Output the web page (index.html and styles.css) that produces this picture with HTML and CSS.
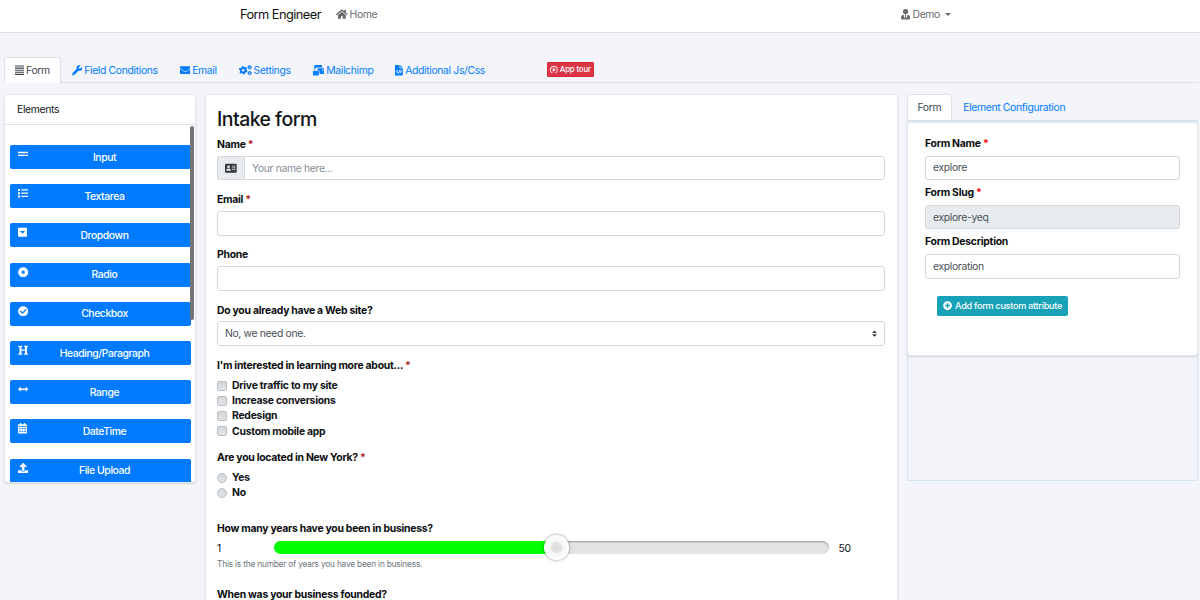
FILE: index.html
```
<!DOCTYPE html>
<html lang="en">
<head>
    <meta charset="UTF-8">
    <meta name="viewport" content="width=device-width, initial-scale=1.0">
    <title>Form Engineer</title>
    <link rel="stylesheet" href="styles.css">
</head>
<body>
    <nav class="navbar">
        <a class="brand" href="#">Form Engineer</a>
        <a class="nav-item" href="#">
            <svg class="icon" viewBox="0 0 576 512"><path d="M280.37 148.26L96 300.11V464a16 16 0 0 0 16 16l112.06-.29a16 16 0 0 0 15.92-16V368a16 16 0 0 1 16-16h64a16 16 0 0 1 16 16v95.64a16 16 0 0 0 16 16.05L464 480a16 16 0 0 0 16-16V300L295.67 148.26a12.19 12.19 0 0 0-15.3 0zM571.6 251.47L488 182.56V44.05a12 12 0 0 0-12-12h-56a12 12 0 0 0-12 12v72.61L318.47 43a48 48 0 0 0-61 0L4.34 251.47a12 12 0 0 0-1.6 16.9l25.5 31A12 12 0 0 0 45.15 301l235.22-193.74a12.19 12.19 0 0 1 15.3 0L530.9 301a12 12 0 0 0 16.9-1.6l25.5-31a12 12 0 0 0-1.7-16.93z"/></svg>
            Home
        </a>
        <a class="nav-item user" href="#">
            <svg class="icon" viewBox="0 0 448 512"><path d="M224 256a128 128 0 1 0 0-256 128 128 0 0 0 0 256zm96 33l-48 191-32-136 32-56h-96l32 56-32 136-48-191C57 292 0 350 0 422v42c0 26 21 48 48 48h352c27 0 48-22 48-48v-42c0-72-57-130-128-133z"/></svg>
            Demo
            <span class="caret"></span>
        </a>
    </nav>

    <ul class="tabs main-tabs">
        <li class="tab active">
            <svg class="icon" viewBox="0 0 448 512"><path d="M0 20h448v56H0zM0 124h448v56H0zM0 228h448v56H0zM0 332h448v56H0zM0 436h448v56H0z"/></svg>
            Form
        </li>
        <li class="tab">
            <svg class="icon" viewBox="0 0 512 512"><path d="M507.73 109.1c-2.24-9.03-13.54-12.09-20.12-5.51l-74.36 74.36-67.88-11.31-11.31-67.88 74.36-74.36c6.62-6.62 3.43-17.9-5.66-20.16-47.38-11.74-99.55.91-136.58 37.93-39.64 39.64-50.55 97.1-34.05 147.2L18.74 402.76c-24.99 24.99-24.99 65.51 0 90.5 24.99 24.99 65.51 24.99 90.5 0l213.21-213.21c50.12 16.71 107.47 5.68 147.37-34.22 37.07-37.07 49.7-89.32 37.91-136.73zM64 472c-13.25 0-24-10.75-24-24 0-13.26 10.75-24 24-24s24 10.74 24 24c0 13.25-10.75 24-24 24z"/></svg>
            Field Conditions
        </li>
        <li class="tab">
            <svg class="icon" viewBox="0 0 512 512"><path d="M502.3 190.8c3.9-3.1 9.7-.2 9.7 4.7V400c0 26.5-21.5 48-48 48H48c-26.5 0-48-21.5-48-48V195.6c0-5 5.7-7.8 9.7-4.7 22.4 17.4 52.1 39.5 154.1 113.6 21.1 15.4 56.7 47.8 92.2 47.6 35.7.3 72-32.8 92.3-47.6 102-74.1 131.6-96.3 154-113.7zM256 320c23.2.4 56.6-29.2 73.4-41.4 132.7-96.3 142.8-104.7 173.4-128.7 5.8-4.5 9.2-11.5 9.2-18.9v-19c0-26.5-21.5-48-48-48H48c-26.5 0-48 21.5-48 48v19c0 7.4 3.4 14.3 9.2 18.9 30.6 23.9 40.7 32.4 173.4 128.7 16.8 12.2 50.2 41.8 73.4 41.4z"/></svg>
            Email
        </li>
        <li class="tab">
            <svg class="icon outline" viewBox="0 0 640 512">
                <circle cx="206" cy="256" r="112" stroke-width="100"/>
                <circle cx="206" cy="256" r="175" stroke-width="66" stroke-dasharray="92 91"/>
                <circle cx="520" cy="116" r="62" stroke-width="54"/>
                <circle cx="520" cy="116" r="95" stroke-width="36" stroke-dasharray="50 49"/>
                <circle cx="520" cy="396" r="62" stroke-width="54"/>
                <circle cx="520" cy="396" r="95" stroke-width="36" stroke-dasharray="50 49"/>
            </svg>
            Settings
        </li>
        <li class="tab">
            <svg class="icon" viewBox="0 0 576 512"><path d="M160 448c-26 0-48-22-48-48-28-21-51-38-59-43-12-9-33-20-53-37v160c0 18 14 32 32 32h224c18 0 32-14 32-32V320c-20 17-41 28-53 37-9 6-31 23-59 43zM128 416c20 15 12 15 32 0 84-60 99-71 128-94v-2c0-18-14-32-32-32H32c-18 0-32 14-32 32v2c29 23 44 34 128 94zM544 160H256c-18 0-32 14-32 32v64h32c35 0 64 29 64 64v128h224c18 0 32-14 32-32V192c0-18-14-32-32-32zm-32 128h-64v-64h64zM96 224c0-54 43-96 96-96h256V32c0-18-14-32-32-32H96C78 0 64 14 64 32v224h32z"/></svg>
            Mailchimp
        </li>
        <li class="tab">
            <svg class="icon" viewBox="0 0 384 512"><path fill-rule="evenodd" d="M24 0h200v136c0 13 11 24 24 24h136v328c0 13-11 24-24 24H24c-13 0-24-11-24-24V24C0 11 11 0 24 0zm96 244l-76 82 76 82 32-32-48-50 48-50zm98-12l-62 200 38 12 62-200zm50 12l-32 32 48 50-48 50 32 32 76-82zM256 0l128 128H256z"/></svg>
            Additional Js/Css
        </li>
        <li class="tour">
            <button class="btn btn-danger">
                <svg class="icon" viewBox="0 0 512 512"><path fill-rule="evenodd" d="M256 8a248 248 0 1 0 0 496 248 248 0 0 0 0-496zm0 52a196 196 0 1 1 0 392 196 196 0 0 1 0-392zm-72 68l208 128-208 128z"/></svg>
                App tour
            </button>
        </li>
    </ul>

    <main class="builder">
        <aside class="card elements">
            <div class="card-header">Elements</div>
            <div class="element-list">
                <button class="element">
                    <svg class="icon" viewBox="0 0 512 512"><path d="M0 140h512v70H0zM0 280h512v70H0z"/></svg>
                    Input
                </button>
                <button class="element">
                    <svg class="icon" viewBox="0 0 512 512"><path d="M0 48h96v96H0zM0 208h96v96H0zM0 368h96v96H0zM160 64h352v64H160zM160 224h352v64H160zM160 384h352v64H160z"/></svg>
                    Textarea
                </button>
                <button class="element">
                    <svg class="icon" viewBox="0 0 448 512"><path fill-rule="evenodd" d="M48 32h352a48 48 0 0 1 48 48v352a48 48 0 0 1-48 48H48a48 48 0 0 1-48-48V80a48 48 0 0 1 48-48zm52 160l124 136 124-136z"/></svg>
                    Dropdown
                </button>
                <button class="element">
                    <svg class="icon" viewBox="0 0 512 512"><path fill-rule="evenodd" d="M256 8a248 248 0 1 0 0 496 248 248 0 0 0 0-496zm0 168a80 80 0 1 1 0 160 80 80 0 0 1 0-160z"/></svg>
                    Radio
                </button>
                <button class="element">
                    <svg class="icon" viewBox="0 0 512 512"><path d="M504 256c0 136.967-111.033 248-248 248S8 392.967 8 256 119.033 8 256 8s248 111.033 248 248zM227.314 387.314l184-184c6.248-6.248 6.248-16.379 0-22.627l-22.627-22.627c-6.248-6.249-16.379-6.249-22.628 0L216 308.118l-70.059-70.059c-6.248-6.248-16.379-6.248-22.628 0l-22.627 22.627c-6.248 6.248-6.248 16.379 0 22.627l104 104c6.249 6.249 16.379 6.249 22.628.001z"/></svg>
                    Checkbox
                </button>
                <button class="element">
                    <svg class="icon" viewBox="0 0 512 512"><path d="M16 32h192v64h-40v120h176V96h-40V32h192v64h-56v320h56v64H304v-64h40V284H168v132h40v64H16v-64h56V96H16z"/></svg>
                    Heading/Paragraph
                </button>
                <button class="element">
                    <svg class="icon" viewBox="0 0 512 512"><path d="M0 256l130-130v90h252v-90l130 130-130 130v-90H130v90z"/></svg>
                    Range
                </button>
                <button class="element">
                    <svg class="icon" viewBox="0 0 448 512"><path fill-rule="evenodd" d="M0 160v-48c0-26 22-48 48-48h48V0h64v64h128V0h64v64h48c26 0 48 22 48 48v48zM0 192h448v272c0 26-22 48-48 48H48c-26 0-48-22-48-48zm64 56v64h72v-64zm124 0v64h72v-64zm124 0v64h72v-64zM64 376v64h72v-64zm124 0v64h72v-64zm124 0v64h72v-64z"/></svg>
                    DateTime
                </button>
                <button class="element">
                    <svg class="icon" viewBox="0 0 512 512"><path d="M296 384h-80c-13.300 0-24-10.700-24-24V192h-87.700c-17.800 0-26.700-21.500-14.100-34.100L242.300 5.700c7.500-7.500 19.800-7.500 27.300 0l152.200 152.200c12.600 12.600 3.700 34.100-14.100 34.100H320v168c0 13.300-10.700 24-24 24zm216-8v112c0 13.300-10.700 24-24 24H24c-13.300 0-24-10.700-24-24V376c0-13.300 10.700-24 24-24h136v8c0 30.900 25.100 56 56 56h80c30.900 0 56-25.100 56-56v-8h136c13.300 0 24 10.700 24 24z"/></svg>
                    File Upload
                </button>
                <span class="scrollbar"></span>
            </div>
        </aside>

        <section class="card preview">
            <h1>Intake form</h1>
            <div class="form-group">
                <label>Name <span class="required">*</span></label>
                <div class="input-group">
                    <span class="addon">
                        <svg class="icon" viewBox="0 0 576 512"><path fill-rule="evenodd" d="M48 32h480c26 0 48 22 48 48v352c0 26-22 48-48 48H48c-26 0-48-22-48-48V80c0-26 22-48 48-48zm128 96a64 64 0 1 0 0 128 64 64 0 0 0 0-128zm-45 160c-37 0-67 27-67 60v18c0 10 10 18 22 18h180c12 0 22-8 22-18v-18c0-33-30-60-67-60zM352 136v40h160v-40zm0 84v40h160v-40zm0 84v40h160v-40z"/></svg>
                    </span>
                    <input class="control" type="text" placeholder="Your name here...">
                </div>
            </div>
            <div class="form-group">
                <label>Email <span class="required">*</span></label>
                <input class="control" type="text">
            </div>
            <div class="form-group">
                <label>Phone</label>
                <input class="control" type="text">
            </div>
            <div class="form-group">
                <label>Do you already have a Web site?</label>
                <div class="control select">
                    No, we need one.
                    <svg class="arrows" viewBox="0 0 4 5"><path d="M2 0L0 2h4zm0 5L0 3h4z"/></svg>
                </div>
            </div>
            <div class="form-group choices">
                <label>I'm interested in learning more about... <span class="required">*</span></label>
                <div class="choice"><span class="box"></span>Drive traffic to my site</div>
                <div class="choice"><span class="box"></span>Increase conversions</div>
                <div class="choice"><span class="box"></span>Redesign</div>
                <div class="choice"><span class="box"></span>Custom mobile app</div>
            </div>
            <div class="form-group choices">
                <label>Are you located in New York? <span class="required">*</span></label>
                <div class="choice"><span class="box round"></span>Yes</div>
                <div class="choice"><span class="box round"></span>No</div>
            </div>
            <div class="form-group years">
                <label>How many years have you been in business?</label>
                <div class="range">
                    <span class="range-min">1</span>
                    <div class="track">
                        <div class="fill"></div>
                        <div class="handle"></div>
                    </div>
                    <span class="range-max">50</span>
                </div>
                <p class="help">This is the number of years you have been in business.</p>
            </div>
            <div class="form-group">
                <label>When was your business founded?</label>
            </div>
        </section>

        <aside class="config">
            <ul class="tabs">
                <li class="tab active">Form</li>
                <li class="tab">Element Configuration</li>
            </ul>
            <div class="config-body">
                <div class="card settings">
                    <label>Form Name <span class="required">*</span></label>
                    <input class="control" type="text" value="explore">
                    <label>Form Slug <span class="required">*</span></label>
                    <input class="control" type="text" value="explore-yeq" disabled>
                    <label>Form Description</label>
                    <input class="control" type="text" value="exploration">
                    <button class="btn btn-info">
                        <svg class="icon" viewBox="0 0 512 512"><path fill-rule="evenodd" d="M256 8a248 248 0 1 0 0 496 248 248 0 0 0 0-496zm-40 112h80v96h96v80h-96v96h-80v-96h-96v-80h96z"/></svg>
                        Add form custom attribute
                    </button>
                </div>
            </div>
        </aside>
    </main>
</body>
</html>
```
FILE: styles.css
```
* {
    margin: 0;
    padding: 0;
    box-sizing: border-box;
}

body {
    height: 600px;
    overflow: hidden;
    background-color: #f4f5fa;
    color: #111418;
    font-family: Inter, "Liberation Sans", sans-serif;
    font-size: 10.4px;
    line-height: 15.6px;
    letter-spacing: -0.35px;
}

a {
    color: inherit;
    text-decoration: none;
}

ul {
    list-style: none;
}

button,
input {
    font: inherit;
    letter-spacing: inherit;
}

.icon {
    height: 1em;
    fill: currentColor;
    flex-shrink: 0;
}

.outline {
    fill: none;
    stroke: currentColor;
}

/* Navbar */
.navbar {
    display: flex;
    align-items: center;
    height: 33px;
    padding: 0 249px 3px 240px;
    background-color: #fff;
    border-bottom: 1px solid #dee2e6;
}

.brand {
    font-size: 12.8px;
    letter-spacing: -0.55px;
    color: #111;
    margin-right: 15px;
}

.nav-item {
    display: flex;
    align-items: center;
    gap: 2px;
    color: #6a6a6a;
}

.user {
    margin-left: auto;
}

.caret {
    margin-left: 3px;
    border: 3px solid transparent;
    border-top-color: currentColor;
    border-bottom: 0;
}

/* Tabs */
.tabs {
    display: flex;
    height: 26px;
    border-bottom: 1px solid #dee2e6;
}

.main-tabs {
    margin: 24px 2px 0 4px;
}

.tab {
    display: flex;
    align-items: center;
    gap: 2px;
    height: 26px;
    padding: 0 10px;
    border: 1px solid transparent;
    border-bottom: 0;
    color: #007bff;
}

.tab.active {
    background-color: #fff;
    color: #3f464c;
    border-color: #dee2e6;
    border-radius: 3px 3px 0 0;
}

.tour {
    display: flex;
    align-items: center;
    margin-left: 51px;
}

.btn {
    display: flex;
    align-items: center;
    border: 0;
    color: #fff;
    font-weight: 500;
}

.btn-danger {
    gap: 2px;
    height: 15px;
    padding: 0 2px;
    background-color: #dc3545;
    border: 1px solid #d92638;
    border-radius: 1px;
    font-size: 7.8px;
    letter-spacing: -0.15px;
}

.btn-info {
    gap: 3px;
    width: 131px;
    height: 20px;
    margin: 17px 0 0 12px;
    padding: 0 6px;
    background-color: #17a2b8;
    border-radius: 2px;
    font-size: 9.1px;
    letter-spacing: -0.28px;
    white-space: nowrap;
}

/* Builder columns */
.builder {
    display: grid;
    grid-template-columns: 191.5px 693px 291.5px;
    column-gap: 9px;
    align-items: start;
    padding: 11px 0 0 4px;
}

.card {
    background-color: #fff;
    border: 1px solid #e6e8ec;
    border-radius: 3px;
    box-shadow: 0 1px 2px rgba(0, 0, 0, 0.14);
}

.elements {
    height: 389px;
    overflow: hidden;
}

.card-header {
    height: 30px;
    padding: 7px 12px;
    border-bottom: 1px solid #dfe1e4;
}

.element-list {
    position: relative;
    display: flex;
    flex-direction: column;
    gap: 15.2px;
    padding: 20px 4.5px 0;
}

.element {
    position: relative;
    width: 181px;
    height: 24px;
    padding: 1px 0 0 9px;
    border: 0;
    border-radius: 2px;
    background-color: #007bff;
    color: #fff;
    font-weight: 500;
    letter-spacing: -0.42px;
}

.element .icon {
    position: absolute;
    top: 4px;
    left: 8px;
}

.scrollbar {
    position: absolute;
    top: 1px;
    right: 1px;
    width: 4px;
    height: 194px;
    border-radius: 2px;
    background-color: #757575;
}

/* Form preview */
.preview {
    height: 520px;
    padding: 14px 12px 0 11.5px;
}

.preview h1 {
    height: 28px;
    font-size: 19.5px;
    font-weight: 500;
    line-height: 21px;
    letter-spacing: -0.55px;
}

.form-group {
    height: 55.2px;
}

label {
    display: block;
    margin-bottom: 3.2px;
    font-weight: 700;
    letter-spacing: -0.26px;
    color: #0b0d0f;
}

.required {
    color: #b22222;
}

.settings .required {
    color: #f00;
}

.control {
    display: block;
    width: 100%;
    height: 24.6px;
    padding: 0 7px;
    background-color: #fff;
    border: 1px solid #d3d8de;
    border-radius: 3px;
    color: #495057;
}

.control::placeholder {
    color: #868e96;
}

.control:disabled {
    background-color: #e9ecef;
}

.input-group {
    display: flex;
}

.input-group .control {
    border-radius: 0 3px 3px 0;
}

.addon {
    display: flex;
    align-items: center;
    justify-content: center;
    width: 27px;
    flex-shrink: 0;
    background-color: #e9ecef;
    border: 1px solid #d3d8de;
    border-right: 0;
    border-radius: 3px 0 0 3px;
    color: #343a40;
}

.select {
    display: flex;
    align-items: center;
    justify-content: space-between;
}

.arrows {
    width: 5px;
    height: 7px;
    fill: #343a40;
}

.choices {
    height: auto;
    margin-bottom: 10.8px;
}

.choices label {
    margin-bottom: 4.8px;
}

.choice {
    display: flex;
    align-items: center;
    gap: 5px;
    height: 15.2px;
    font-weight: 700;
    letter-spacing: -0.26px;
}

.box {
    width: 10px;
    height: 10px;
    border: 1px solid #b9bec3;
    border-radius: 2px;
    background: linear-gradient(#d4d7da, #e3e5e8);
}

.round {
    border-radius: 50%;
}

.years {
    height: 66px;
    margin-top: 21px;
}

.years label {
    margin-bottom: 0;
}

.range {
    display: flex;
    align-items: center;
    height: 20px;
}

.range-min {
    width: 56.5px;
    padding-top: 3px;
}

.range-max {
    padding: 3px 0 0 10px;
}

.track {
    position: relative;
    width: 555px;
    height: 13px;
    border-radius: 7px;
    background-color: #e4e4e4;
    box-shadow: inset 0 1px 2px rgba(0, 0, 0, 0.35);
}

.fill {
    width: 283px;
    height: 13px;
    border-radius: 7px 0 0 7px;
    background-color: #0f0;
}

.handle {
    position: absolute;
    top: -6px;
    left: 270px;
    width: 25px;
    height: 25px;
    border-radius: 50%;
    background: radial-gradient(circle, #ddd 0, #e2e2e2 5px, #f5f5f5 6px, #fff 12px);
    box-shadow: 0 0 3px rgba(0, 0, 0, 0.5);
}

.help {
    margin-top: 1px;
    font-size: 8.3px;
    line-height: 12px;
    letter-spacing: -0.19px;
    color: #6c757d;
}

/* Configuration panel */
.config .tabs {
    height: 27px;
}

.config-body {
    height: 360px;
    border: 1px solid #d6e6f3;
}

.settings {
    height: 234px;
    margin: 0 -1px;
    padding: 13px 17px 0 17.5px;
}

.settings label {
    margin-bottom: 4px;
}

.settings .control {
    margin-bottom: 5px;
}
```
